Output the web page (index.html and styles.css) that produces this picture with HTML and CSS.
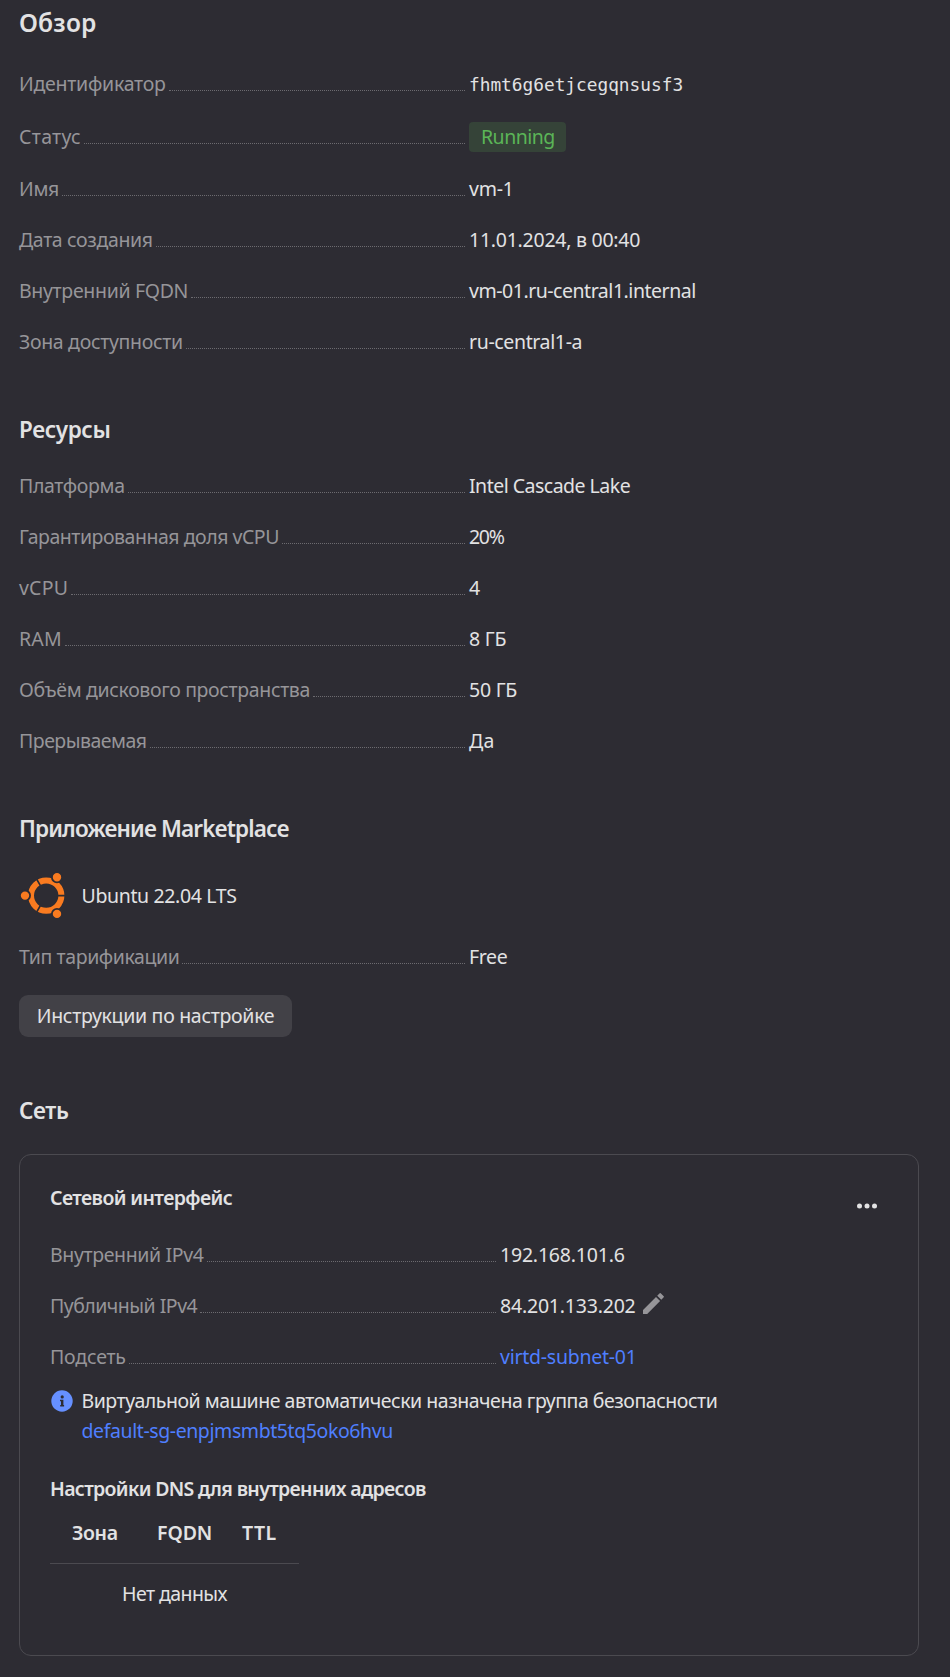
FILE: index.html
```
<!DOCTYPE html>
<html lang="ru">
<head>
<meta charset="utf-8">
<title>vm-1 — Обзор</title>
<link rel="stylesheet" href="styles.css">
</head>
<body>
<main class="page">
  <section class="section section-first">
    <h1 class="title-main">Обзор</h1>
    <dl class="props">
      <div class="row"><dt><span class="k25">Идентификатор</span><i></i></dt><dd class="mono">fhmt6g6etjcegqnsusf3</dd></div>
      <div class="row row-status"><dt><span class="w3">Статус</span><i></i></dt><dd><span class="tag k5">Running</span></dd></div>
      <div class="row"><dt><span>Имя</span><i></i></dt><dd class="k25">vm-1</dd></div>
      <div class="row"><dt><span class="k35">Дата создания</span><i></i></dt><dd class="k25">11.01.2024, в 00:40</dd></div>
      <div class="row"><dt><span>Внутренний FQDN</span><i></i></dt><dd class="k47">vm-01.ru-central1.internal</dd></div>
      <div class="row"><dt><span>Зона доступности</span><i></i></dt><dd class="k35">ru-central1-a</dd></div>
    </dl>
  </section>

  <section class="section">
    <h2 class="title k3">Ресурсы</h2>
    <dl class="props">
      <div class="row"><dt><span class="k35">Платформа</span><i></i></dt><dd class="k5">Intel Cascade Lake</dd></div>
      <div class="row"><dt><span class="k47">Гарантированная доля vCPU</span><i></i></dt><dd class="k10">20%</dd></div>
      <div class="row"><dt><span class="w2">vCPU</span><i></i></dt><dd>4</dd></div>
      <div class="row"><dt><span class="w2">RAM</span><i></i></dt><dd class="k2">8 ГБ</dd></div>
      <div class="row"><dt><span class="k35">Объём дискового пространства</span><i></i></dt><dd class="k25">50 ГБ</dd></div>
      <div class="row"><dt><span class="k5">Прерываемая</span><i></i></dt><dd class="w2">Да</dd></div>
    </dl>
  </section>

  <section class="section">
    <h2 class="title">Приложение Marketplace</h2>
    <div class="product">
      <svg class="product-logo" width="48" height="48" viewBox="0 0 48 48">
        <g fill="none" stroke="#f97b20" stroke-width="6">
          <circle cx="27.2" cy="24.6" r="15.2"/>
        </g>
        <g stroke="#2d2c33" stroke-width="1.7">
          <path d="M35 24.6h12M22.9 17.2l-6-10.4M22.9 32l-6 10.4"/>
        </g>
        <g fill="#f97b20" stroke="#2d2c33" stroke-width="1.8">
          <circle cx="6" cy="24.6" r="5.1"/>
          <circle cx="38" cy="6.3" r="5.1"/>
          <circle cx="38" cy="42.9" r="5.1"/>
        </g>
      </svg>
      <span class="k35">Ubuntu 22.04 LTS</span>
    </div>
    <dl class="props">
      <div class="row"><dt><span class="k4">Тип тарификации</span><i></i></dt><dd class="k35">Free</dd></div>
    </dl>
    <button class="button" type="button">Инструкции по настройке</button>
  </section>

  <section class="section section-network">
    <h2 class="title k3">Сеть</h2>
    <article class="card">
      <header class="card-head">
        <h3 class="subtitle">Сетевой интерфейс</h3>
        <svg class="more" width="22" height="6" viewBox="0 0 22 6" fill="#e2e2e3">
          <circle cx="3.5" cy="3" r="2.5"/><circle cx="11" cy="3" r="2.5"/><circle cx="18.5" cy="3" r="2.5"/>
        </svg>
      </header>
      <dl class="props">
        <div class="row"><dt><span class="k35">Внутренний IPv4</span><i></i></dt><dd class="k2">192.168.101.6</dd></div>
        <div class="row"><dt><span class="k5">Публичный IPv4</span><i></i></dt><dd class="k2 editable">84.201.133.202
          <svg class="pencil" width="21" height="21" viewBox="0 0 21 21" fill="#969599">
            <path d="M0 16.9 13 4l4.1 4.1L4.2 21H0zM14.2 2.8 16.7.3q.5-.5 1 0l3 3q.5.5 0 1l-2.4 2.5z"/>
          </svg></dd></div>
        <div class="row"><dt><span class="k2">Подсеть</span><i></i></dt><dd><a class="link k25">virtd-subnet-01</a></dd></div>
      </dl>
      <div class="note">
        <svg class="info" width="22" height="22" viewBox="0 0 22 22">
          <circle cx="11" cy="11" r="10.7" fill="#6690ff"/>
          <circle cx="11.2" cy="6.9" r="1.6" fill="#2d2c33"/>
          <path d="M9 9.7h3.4v5.4h.7v1.5H9.2v-1.5h.8v-3.9H9z" fill="#2d2c33"/>
        </svg>
        <p class="note-text"><span class="k47">Виртуальной машине автоматически назначена группа безопасности</span><br><a class="link k4">default-sg-enpjmsmbt5tq5oko6hvu</a></p>
      </div>
      <h3 class="subtitle dns">Настройки DNS для внутренних адресов</h3>
      <table class="table">
        <thead><tr><th class="zone">Зона</th><th class="fqdn">FQDN</th><th class="ttl">TTL</th></tr></thead>
        <tbody><tr><td colspan="3">Нет данных</td></tr></tbody>
      </table>
    </article>
  </section>
</main>
</body>
</html>
```

FILE: styles.css
```
* { box-sizing: border-box; }

body {
  margin: 0;
  background: #2d2c33;
  color: #e2e2e3;
  font: 19.5px/27px "Noto Sans", sans-serif;
  letter-spacing: -0.32px;
}

.page { width: 919px; padding: 7px 0 21px 19px; }

.title-main, .title, .subtitle, .props, dd, .note-text { margin: 0; }

.title-main { font-size: 24.5px; line-height: 32px; font-weight: 560; letter-spacing: 0.2px; }
.title { padding-top: 1px; font-size: 22.5px; line-height: 30px; font-weight: 560; letter-spacing: -0.87px; }
.title.k3 { letter-spacing: -0.42px; }
.subtitle { font-size: 19.5px; line-height: 27px; font-weight: 560; letter-spacing: -0.6px; }

.section { margin-top: 59px; }
.section-first { margin-top: 0; }
.section-network { margin-top: 58px; }
.section > .title + .props { margin-top: 27px; }
.section-first .props { margin-top: 31px; }

.props { display: flex; flex-direction: column; gap: 24px; }
.row { display: flex; height: 27px; white-space: nowrap; }
.row dt { display: flex; width: 446px; color: #969599; }
.row dt i { flex: 1; height: 21px; margin-left: 3px; border-bottom: 1px dotted #6c6b70; }
.row dd { margin-left: 4px; }
.row-status { height: 30px; }
.row-status dt { padding-top: 2px; }

.row .mono { padding-top: 1px; font-family: "DejaVu Sans Mono", monospace; font-size: 17.8px; letter-spacing: 0; }

.tag {
  display: block;
  height: 30px;
  margin-top: 1px;
  padding: 0 11.5px 0 12px;
  border-radius: 4px;
  background: #354338;
  color: #5bb557;
  line-height: 30px;
}

.product { display: flex; align-items: center; gap: 14.5px; height: 48px; margin: 27px 0 24px; }
.product-logo { flex: none; }

.button {
  display: block;
  width: 273px;
  height: 42px;
  margin-top: 25px;
  padding: 0 0 2px;
  border: 0;
  border-radius: 9px;
  background: #424147;
  color: inherit;
  font: inherit;
  letter-spacing: -0.3px;
}

.card {
  height: 502px;
  margin-top: 28px;
  padding: 29px 30px;
  border: 1px solid #4b4a50;
  border-radius: 12px;
}
.card-head { display: flex; justify-content: space-between; margin-bottom: 30px; }
.more { margin: 19px 10px 0 0; }
.card .subtitle { margin: 0; }
.editable { display: flex; }
.pencil { margin: 1px 0 0 7px; }
.link { color: #4f7fff; }

.note { display: flex; gap: 8.5px; margin-top: 16px; line-height: 30px; white-space: nowrap; }
.info { margin: 4px 0 0 1px; }

.card .subtitle.dns { margin-top: 29px; letter-spacing: -0.66px; }

.table { width: 249px; margin-top: 17px; border-collapse: collapse; table-layout: fixed; }
.table th { height: 44px; padding: 0; border-bottom: 1px solid #4b4a50; font-weight: 560; text-align: left; vertical-align: top; letter-spacing: -0.1px; }
.table .zone { width: 107px; padding-left: 22px; letter-spacing: -0.4px; }
.table .fqdn { width: 85px; }
.table .ttl { width: 57px; letter-spacing: 0.4px; }
.table td { padding: 16px 0 0; text-align: center; letter-spacing: -0.55px; }

/* Letter-spacing steps */
.w3 { letter-spacing: 0.3px; }
.w2 { letter-spacing: 0.2px; }
.k2 { letter-spacing: -0.2px; }
.k25 { letter-spacing: -0.25px; }
.k35 { letter-spacing: -0.36px; }
.k4 { letter-spacing: -0.41px; }
.k47 { letter-spacing: -0.47px; }
.k5 { letter-spacing: -0.51px; }
.k10 { letter-spacing: -1.3px; }
```
